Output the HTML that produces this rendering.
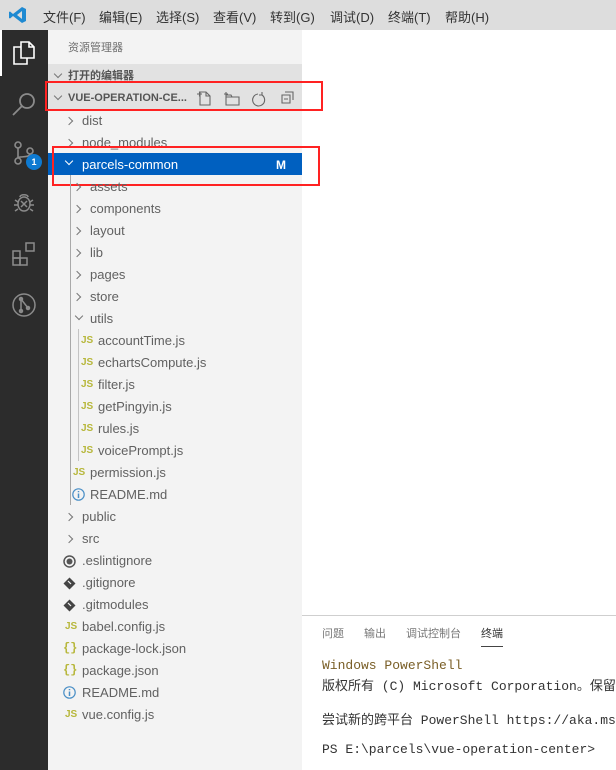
<!DOCTYPE html>
<html><head><meta charset="utf-8"><style>
*{margin:0;padding:0;box-sizing:border-box}
body{width:616px;height:770px;overflow:hidden;position:relative;background:#fff;font-family:"Segoe UI","Liberation Sans","Noto Sans CJK SC",sans-serif;font-size:13px;color:#616161}
.menu{position:absolute;left:0;top:0;width:616px;height:30px;background:#dddddd;color:#333;font-size:13px}
.menu span{position:absolute;top:7px}
.act{position:absolute;left:0;top:30px;width:48px;height:740px;background:#2c2c2c}
.side{position:absolute;left:48px;top:30px;width:254px;height:740px;background:#f3f3f3}
.r{position:absolute;height:22px;line-height:22px;white-space:nowrap;font-size:13px;color:#616161}
.chev{position:absolute;width:6px;height:6px;border-right:1.2px solid #777;border-bottom:1.2px solid #777}
.cr{transform:rotate(-45deg)}
.cd{transform:rotate(45deg)}
.js{position:absolute;font-size:10px;font-weight:bold;color:#b7b73b;font-family:"Liberation Sans",sans-serif}
.br{position:absolute;font-size:12px;font-weight:bold;color:#b7b73b;font-family:"Liberation Mono",monospace}
.term{position:absolute;left:302px;top:615px;width:314px;height:155px;overflow:hidden}
.mono{font-family:"Liberation Mono","Noto Sans CJK SC",monospace;font-size:13px;color:#333;position:absolute;left:20px;white-space:nowrap}
</style></head><body>
<div class="menu">
<svg style="position:absolute;left:9px;top:6px" width="18" height="18" viewBox="0 0 18 18"><path d="M13 1 L17 3 V15 L13 17 L4 10 L1 12.5 L0 12 V6 L1 5.5 L4 8 Z M13 5 L8 9 L13 13 Z" fill="#1f8ad2"/></svg>
<span style="left:43px">文件(F)</span><span style="left:99px">编辑(E)</span><span style="left:156px">选择(S)</span><span style="left:213px">查看(V)</span><span style="left:270px">转到(G)</span><span style="left:330px">调试(D)</span><span style="left:388px">终端(T)</span><span style="left:445px">帮助(H)</span>
</div>
<div class="act">
<div style="position:absolute;left:0;top:0;width:2px;height:46px;background:#fff"></div>
<svg style="position:absolute;left:12px;top:10px" width="24" height="26" viewBox="0 0 24 26" fill="none" stroke="#fff" stroke-width="1.6"><path d="M9 2h8l5 5v11H9z M17 2v5h5"/><path d="M9 7H2v17h13v-6"/></svg>
<svg style="position:absolute;left:11px;top:61px" width="26" height="26" viewBox="0 0 26 26" fill="none" stroke="#8b8b8b" stroke-width="1.8"><circle cx="16" cy="10" r="7"/><path d="M11 15L2 24"/></svg>
<svg style="position:absolute;left:12px;top:110px" width="24" height="26" viewBox="0 0 24 26" fill="none" stroke="#8b8b8b" stroke-width="1.6"><circle cx="6" cy="5" r="3"/><circle cx="6" cy="21" r="3"/><circle cx="18" cy="11" r="3"/><path d="M6 8v10M18 14c0 4-12 2-12 4"/></svg>
<div style="position:absolute;left:26px;top:124px;width:16px;height:16px;border-radius:8px;background:#0e7ad1;color:#fff;font-size:9px;font-weight:bold;text-align:center;line-height:16px;font-family:'Liberation Sans'">1</div>
<svg style="position:absolute;left:12px;top:160px" width="24" height="24" viewBox="0 0 24 24" fill="none" stroke="#8b8b8b" stroke-width="1.5"><ellipse cx="12" cy="14" rx="6" ry="7"/><path d="M8 7c0-3 8-3 8 0M3 10l3 2M21 10l-3 2M2 15h4M22 15h-4M3 21l3-2M21 21l-3-2M9 11l6 6M15 11l-6 6"/></svg>
<svg style="position:absolute;left:11px;top:211px" width="26" height="26" viewBox="0 0 26 26" fill="none" stroke="#8b8b8b" stroke-width="1.5"><rect x="2" y="10" width="7" height="7"/><rect x="2" y="17" width="7" height="7"/><rect x="9" y="17" width="7" height="7"/><rect x="15" y="2" width="8" height="8"/></svg>
<svg style="position:absolute;left:11px;top:262px" width="26" height="26" viewBox="0 0 26 26" fill="none" stroke="#8b8b8b" stroke-width="1.5"><circle cx="13" cy="13" r="11"/><path d="M10 19V7l7 9"/><circle cx="10" cy="19" r="1.5" fill="#8b8b8b"/><circle cx="10" cy="7" r="1.5" fill="#8b8b8b"/><circle cx="17" cy="16" r="1.5" fill="#8b8b8b"/></svg>
</div>
<div class="side"></div>
<div class="r" style="left:68px;top:37px;font-size:11px;color:#6f6f6f">资源管理器</div>
<div style="position:absolute;left:48px;top:64px;width:254px;height:45px;background:#e2e2e2"></div>
<div class="chev cd" style="left:55px;top:71px"></div><div class="r" style="left:68px;top:65px;font-size:11px;font-weight:bold;color:#555">打开的编辑器</div>
<div class="chev cd" style="left:55px;top:93px"></div><div class="r" style="left:68px;top:87px;font-size:11px;font-weight:bold;color:#555">VUE-OPERATION-CE...</div>
<svg style="position:absolute;left:196px;top:89px" width="100" height="18" viewBox="0 0 100 18" fill="none" stroke="#666" stroke-width="1.1"><path d="M4 3h6l4 4v9H4z M10 3v4h4 M1 5h5M3.5 2.5v5"/><path d="M30 6h5l1 2h7v8H30z M30 8h13 M28 5h4M30 3v4"/><path d="M62 5a6 6 0 1 0 4 1M66 3v3h-3"/><path d="M86 6h8v8h-8z M89 3h8v8 M88 10h4"/></svg>
<div style="position:absolute;left:45px;top:81px;width:278px;height:30px;border:2px solid #f22"></div>
<div class="chev cr" style="left:66px;top:118px"></div><div class="r" style="left:82px;top:110px">dist</div>
<div class="chev cr" style="left:66px;top:140px"></div><div class="r" style="left:82px;top:132px">node_modules</div>
<div style="position:absolute;left:48px;top:153px;width:254px;height:22px;background:#0060c0"></div>
<div class="chev cd" style="left:66px;top:158px;border-color:#fff"></div><div class="r" style="left:82px;top:154px;color:#fff">parcels-common</div>
<div class="r" style="left:276px;top:154px;color:#fff;font-weight:bold;font-size:12px">M</div>
<div style="position:absolute;left:52px;top:146px;width:268px;height:40px;border:2px solid #f22"></div>
<div style="position:absolute;left:70px;top:175px;width:1px;height:330px;background:#a9a9a9"></div>
<div style="position:absolute;left:78px;top:329px;width:1px;height:132px;background:#c4c4c4"></div>
<div class="chev cr" style="left:74px;top:184px"></div><div class="r" style="left:90px;top:176px">assets</div>
<div class="chev cr" style="left:74px;top:206px"></div><div class="r" style="left:90px;top:198px">components</div>
<div class="chev cr" style="left:74px;top:228px"></div><div class="r" style="left:90px;top:220px">layout</div>
<div class="chev cr" style="left:74px;top:250px"></div><div class="r" style="left:90px;top:242px">lib</div>
<div class="chev cr" style="left:74px;top:272px"></div><div class="r" style="left:90px;top:264px">pages</div>
<div class="chev cr" style="left:74px;top:294px"></div><div class="r" style="left:90px;top:286px">store</div>
<div class="chev cd" style="left:76px;top:313px"></div><div class="r" style="left:90px;top:308px">utils</div>
<div class="js" style="left:81px;top:335px">JS</div><div class="r" style="left:98px;top:330px">accountTime.js</div>
<div class="js" style="left:81px;top:357px">JS</div><div class="r" style="left:98px;top:352px">echartsCompute.js</div>
<div class="js" style="left:81px;top:379px">JS</div><div class="r" style="left:98px;top:374px">filter.js</div>
<div class="js" style="left:81px;top:401px">JS</div><div class="r" style="left:98px;top:396px">getPingyin.js</div>
<div class="js" style="left:81px;top:423px">JS</div><div class="r" style="left:98px;top:418px">rules.js</div>
<div class="js" style="left:81px;top:445px">JS</div><div class="r" style="left:98px;top:440px">voicePrompt.js</div>
<div class="js" style="left:73px;top:467px">JS</div><div class="r" style="left:90px;top:462px">permission.js</div>
<svg style="position:absolute;left:72px;top:488px" width="13" height="13" viewBox="0 0 13 13"><circle cx="6.5" cy="6.5" r="5.7" fill="none" stroke="#4a8fc6" stroke-width="1.2"/><path d="M6.5 5.5v4.5M6.5 3v1.2" stroke="#4a8fc6" stroke-width="1.5"/></svg><div class="r" style="left:90px;top:484px">README.md</div>
<div class="chev cr" style="left:66px;top:514px"></div><div class="r" style="left:82px;top:506px">public</div>
<div class="chev cr" style="left:66px;top:536px"></div><div class="r" style="left:82px;top:528px">src</div>
<svg style="position:absolute;left:63px;top:555px" width="13" height="13" viewBox="0 0 13 13"><circle cx="6.5" cy="6.5" r="5.5" fill="none" stroke="#555" stroke-width="1.5"/><circle cx="6.5" cy="6.5" r="3" fill="#555"/></svg><div class="r" style="left:82px;top:550px">.eslintignore</div>
<svg style="position:absolute;left:63px;top:577px" width="13" height="13" viewBox="0 0 13 13"><path d="M6.5 0.5L12.5 6.5L6.5 12.5L0.5 6.5Z" fill="#444"/><path d="M5 4l3 3" stroke="#f3f3f3" stroke-width="1.2"/></svg><div class="r" style="left:82px;top:572px">.gitignore</div>
<svg style="position:absolute;left:63px;top:599px" width="13" height="13" viewBox="0 0 13 13"><path d="M6.5 0.5L12.5 6.5L6.5 12.5L0.5 6.5Z" fill="#444"/><path d="M5 4l3 3" stroke="#f3f3f3" stroke-width="1.2"/></svg><div class="r" style="left:82px;top:594px">.gitmodules</div>
<div class="js" style="left:65px;top:621px">JS</div><div class="r" style="left:82px;top:616px">babel.config.js</div>
<div class="br" style="left:63px;top:641px">{}</div><div class="r" style="left:82px;top:638px">package-lock.json</div>
<div class="br" style="left:63px;top:663px">{}</div><div class="r" style="left:82px;top:660px">package.json</div>
<svg style="position:absolute;left:63px;top:686px" width="13" height="13" viewBox="0 0 13 13"><circle cx="6.5" cy="6.5" r="5.7" fill="none" stroke="#4a8fc6" stroke-width="1.2"/><path d="M6.5 5.5v4.5M6.5 3v1.2" stroke="#4a8fc6" stroke-width="1.5"/></svg><div class="r" style="left:82px;top:682px">README.md</div>
<div class="js" style="left:65px;top:709px">JS</div><div class="r" style="left:82px;top:704px">vue.config.js</div>
<div class="term">
<div style="position:absolute;left:0;top:0;width:314px;height:1px;background:#cfcfcf"></div>
<div class="r" style="left:20px;top:8px;font-size:11px;color:#777">问题</div>
<div class="r" style="left:62px;top:8px;font-size:11px;color:#777">输出</div>
<div class="r" style="left:104px;top:8px;font-size:11px;color:#777">调试控制台</div>
<div class="r" style="left:179px;top:8px;font-size:11px;color:#333">终端</div>
<div style="position:absolute;left:179px;top:31px;width:22px;height:1px;background:#444"></div>
<div class="mono" style="top:43px;color:#795e26">Windows PowerShell</div>
<div class="mono" style="top:60px">版权所有 (C) Microsoft Corporation。保留所有权利。</div>
<div class="mono" style="top:94px">尝试新的跨平台 PowerShell https://aka.ms/pscore6</div>
<div class="mono" style="top:127px">PS E:\parcels\vue-operation-center&gt;</div>
</div>
</body></html>
